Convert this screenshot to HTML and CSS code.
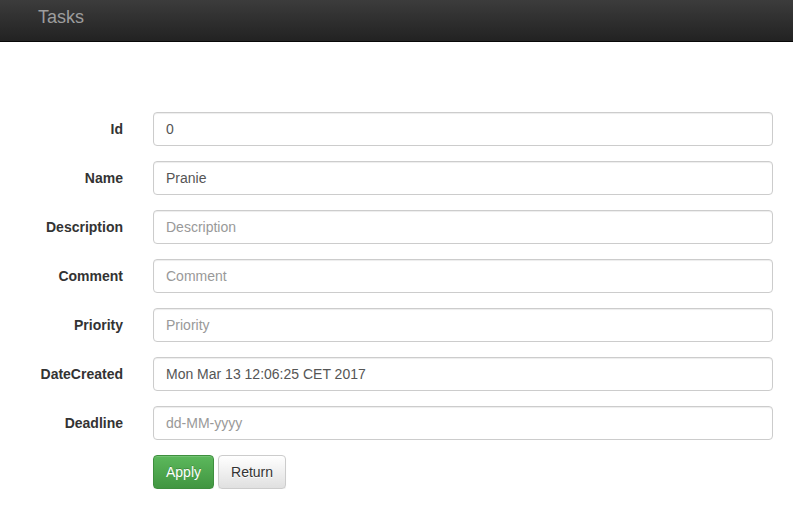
FILE: index.html
```html
<!DOCTYPE html>
<html>
<head>
<meta charset="utf-8">
<title>Tasks</title>
<link rel="stylesheet" href="styles.css">
</head>
<body>
<nav class="navbar">
  <span class="brand">Tasks</span>
</nav>
<form class="task-form">
  <label class="form-label" for="f-id">Id</label>
  <input class="form-input" id="f-id" type="text" value="0">
  <label class="form-label" for="f-name">Name</label>
  <input class="form-input" id="f-name" type="text" value="Pranie">
  <label class="form-label" for="f-desc">Description</label>
  <input class="form-input" id="f-desc" type="text" placeholder="Description">
  <label class="form-label" for="f-comment">Comment</label>
  <input class="form-input" id="f-comment" type="text" placeholder="Comment">
  <label class="form-label" for="f-prio">Priority</label>
  <input class="form-input" id="f-prio" type="text" placeholder="Priority">
  <label class="form-label" for="f-date">DateCreated</label>
  <input class="form-input" id="f-date" type="text" value="Mon Mar 13 12:06:25 CET 2017">
  <label class="form-label" for="f-dead">Deadline</label>
  <input class="form-input" id="f-dead" type="text" placeholder="dd-MM-yyyy">
  <div class="actions">
    <button class="btn btn-success" type="button">Apply</button>
    <button class="btn btn-default" type="button">Return</button>
  </div>
</form>
</body>
</html>
```
FILE: styles.css
```css
html, body {
  margin: 0;
  padding: 0;
  background: #fff;
  font-family: "Liberation Sans", Arial, sans-serif;
  font-size: 14px;
  color: #333;
}
.navbar {
  height: 41px;
  border-bottom: 1px solid #080808;
  background: linear-gradient(to bottom, #3c3c3c 0%, #222 100%);
  box-sizing: content-box;
}
.brand {
  display: inline-block;
  margin-left: 38px;
  padding-top: 7px;
  font-size: 18px;
  line-height: 20px;
  color: #9d9d9d;
}
.task-form {
  display: grid;
  grid-template-columns: 123px 620px;
  column-gap: 30px;
  row-gap: 15px;
  margin-top: 70px;
  align-items: center;
}
.form-label {
  text-align: right;
  font-weight: bold;
  line-height: 20px;
}
.form-input {
  box-sizing: border-box;
  width: 100%;
  height: 34px;
  padding: 6px 12px;
  font-family: inherit;
  font-size: 14px;
  line-height: 20px;
  color: #555;
  background: #fff;
  border: 1px solid #ccc;
  border-radius: 4px;
  box-shadow: inset 0 1px 1px rgba(0,0,0,.075);
  margin: 0;
}
.form-input::placeholder {
  color: #999;
}
.actions {
  grid-column: 2;
  display: flex;
  gap: 4px;
}
.btn {
  box-sizing: border-box;
  height: 34px;
  padding: 6px 12px;
  font-family: inherit;
  font-size: 14px;
  line-height: 20px;
  border-radius: 4px;
  border: 1px solid transparent;
  box-shadow: inset 0 1px 0 rgba(255,255,255,.15), 0 1px 1px rgba(0,0,0,.075);
  text-shadow: 0 -1px 0 rgba(0,0,0,.2);
  margin: 0;
}
.btn-success {
  color: #fff;
  background: linear-gradient(to bottom, #5cb85c 0%, #419641 100%);
  border-color: #3e8f3e;
}
.btn-default {
  color: #333;
  text-shadow: 0 1px 0 #fff;
  background: linear-gradient(to bottom, #fff 0%, #e0e0e0 100%);
  border-color: #ccc;
}
```
